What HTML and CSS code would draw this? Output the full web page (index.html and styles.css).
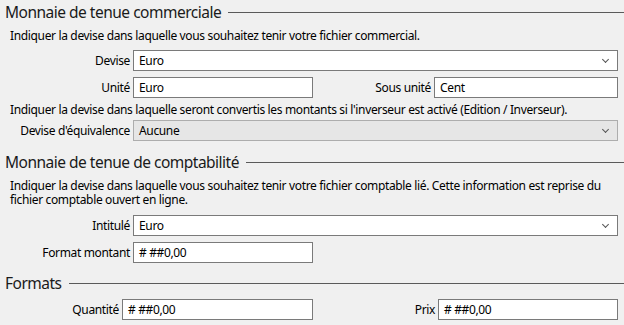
FILE: index.html
```html
<!DOCTYPE html>
<html lang="fr">
<head>
    <meta charset="UTF-8">
    <meta name="viewport" content="width=device-width, initial-scale=1.0">
    <title>Devises</title>
    <link rel="stylesheet" href="styles.css">
</head>
<body>
    <div class="panel">
        <div class="group-title">
            <span>Monnaie de tenue commerciale</span>
        </div>
        <p class="hint">Indiquer la devise dans laquelle vous souhaitez tenir votre fichier commercial.</p>
        <div class="form-row">
            <label class="label">Devise</label>
            <div class="select wide"><span>Euro</span><span class="chevron"></span></div>
        </div>
        <div class="form-row">
            <label class="label">Unité</label>
            <div class="field half">Euro</div>
            <label class="label label-right">Sous unité</label>
            <div class="field grow">Cent</div>
        </div>
        <p class="hint hint-tight">Indiquer la devise dans laquelle seront convertis les montants si l'inverseur est activé (Edition / Inverseur).</p>
        <div class="form-row row-tight">
            <label class="label">Devise d'équivalence</label>
            <div class="select wide disabled"><span>Aucune</span><span class="chevron"></span></div>
        </div>

        <div class="group-title title-second">
            <span>Monnaie de tenue de comptabilité</span>
        </div>
        <p class="hint hint-block">Indiquer la devise dans laquelle vous souhaitez tenir votre fichier comptable lié. Cette information est reprise du fichier comptable ouvert en ligne.</p>
        <div class="form-row row-loose">
            <label class="label">Intitulé</label>
            <div class="select wide"><span>Euro</span><span class="chevron"></span></div>
        </div>
        <div class="form-row">
            <label class="label">Format montant</label>
            <div class="field half"># ##0,00</div>
        </div>

        <div class="group-title title-third">
            <span>Formats</span>
        </div>
        <div class="form-row row-formats">
            <label class="label label-short">Quantité</label>
            <div class="field half"># ##0,00</div>
            <label class="label label-prix">Prix</label>
            <div class="field short"># ##0,00</div>
        </div>
    </div>
</body>
</html>
```

FILE: styles.css
```css
body {
    margin: 0;
    background-color: #f0f0f0;
    font-family: "Noto Sans", "Open Sans", sans-serif;
    font-size: 12px;
    letter-spacing: -0.35px;
    color: #000;
}

.panel {
    width: 624px;
    height: 325px;
    overflow: hidden;
}

.group-title {
    display: flex;
    align-items: center;
    height: 24px;
    padding-left: 5px;
    font-size: 15.5px;
    letter-spacing: -0.5px;
    color: #1a1a1a;
}

.group-title::after {
    content: "";
    flex: 1;
    height: 1px;
    margin-left: 7px;
    background-color: #5a5a5a;
}

.title-second {
    margin-top: 9px;
}

.title-third {
    margin-top: 8px;
}

.hint {
    margin: 4px 0 0 10px;
    line-height: 16px;
}

.hint-block {
    width: 608px;
    margin-top: 5px;
    line-height: 14px;
}

.form-row {
    display: flex;
    align-items: center;
    margin-top: 6px;
    height: 21px;
}

.row-tight {
    margin-top: 2px;
}

.row-loose {
    margin-top: 8px;
}

.row-formats {
    margin-top: 4px;
}

.label {
    width: 133px;
    padding-right: 3px;
    box-sizing: border-box;
    text-align: right;
    white-space: nowrap;
}

.label-short {
    width: 122px;
}

.label-right {
    width: 121px;
}

.label-prix {
    width: 125px;
}

.field,
.select {
    height: 21px;
    box-sizing: border-box;
    border: 1px solid #7a7a7a;
    background-color: #fff;
    padding-left: 5px;
    line-height: 19px;
}

.half {
    width: 180px;
}

.row-formats .half {
    width: 191px;
}

.grow {
    width: 184px;
}

.short {
    width: 180px;
}

.wide {
    width: 485px;
}

.select {
    display: flex;
    justify-content: space-between;
    align-items: center;
    padding-right: 9px;
}

.select.disabled {
    background-color: #e6e6e6;
    border-color: #adadad;
}

.chevron {
    width: 4px;
    height: 4px;
    border-right: 1px solid #555;
    border-bottom: 1px solid #555;
    transform: rotate(45deg);
    margin-top: -3px;
}
```
